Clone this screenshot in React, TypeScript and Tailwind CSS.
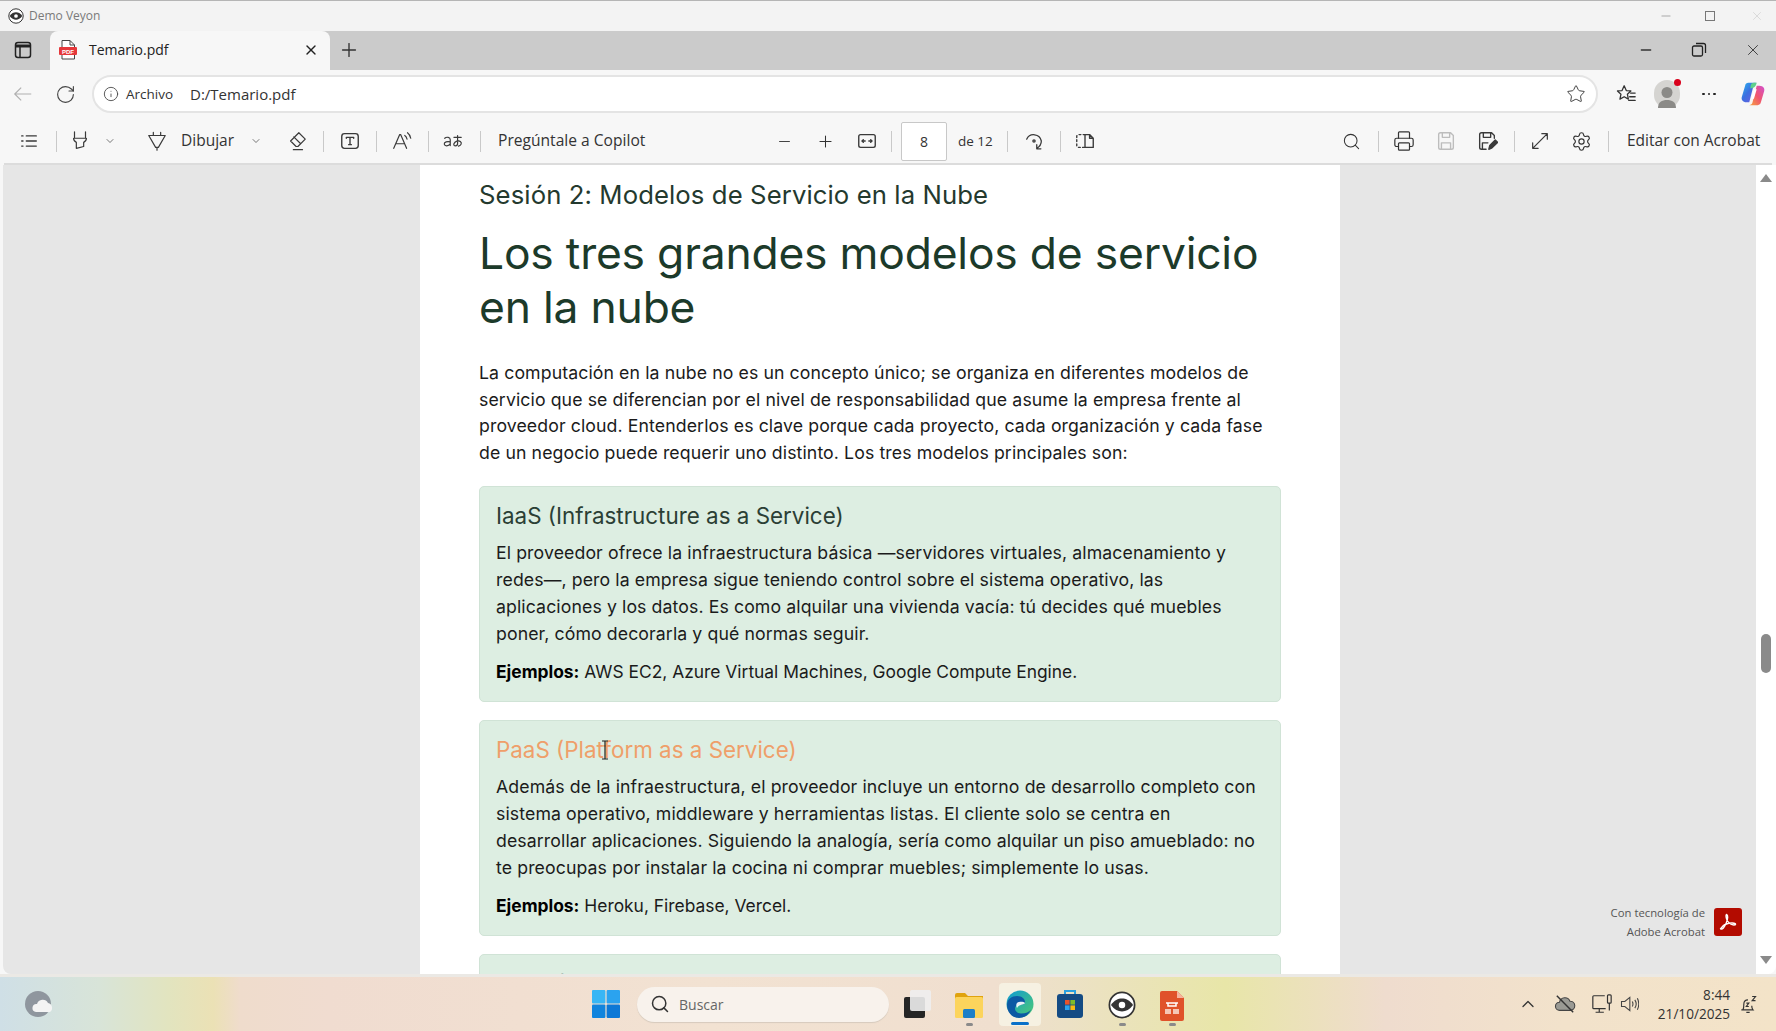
import React from 'react';
import { ChevronDown, ChevronUp, Info, Minus, Plus, Printer, RotateCw, Search, Settings, Star, X } from 'lucide-react';

const FONT_UI = 'font-["Open_Sans",sans-serif]';

const Svg = ({ size = 22, className = '', children }: { size?: number; className?: string; children: React.ReactNode }) => (
  <svg
    width={size}
    height={size}
    viewBox="0 0 24 24"
    fill="none"
    stroke="#3a3a3a"
    strokeWidth="1.5"
    strokeLinecap="round"
    strokeLinejoin="round"
    className={`shrink-0 ${className}`}
  >
    {children}
  </svg>
);

const Sep = ({ className = '' }: { className?: string }) => <div className={`h-[21px] w-px shrink-0 bg-[#c9c9c9] ${className}`} />;

const VeyonEye = ({ size = 16, className = '' }: { size?: number; className?: string }) => (
  <svg width={size} height={size} viewBox="0 0 24 24" className={`shrink-0 ${className}`}>
    <circle cx="12" cy="12" r="10.8" fill="#fff" stroke="#333" strokeWidth="1.500" />
    <path d="M2.500 12c3-4 6-5.500 9.500-5.500s6.500 1.500 9.500 5.500c-3 4-6 5.500-9.500 5.500s-6.500-1.500-9.500-5.500z" fill="#333" />
    <circle cx="12" cy="12" r="2.800" fill="#fff" />
  </svg>
);

const PdfIcon = () => (
  <svg width="18" height="20" viewBox="0 0 18 20" className="shrink-0">
    <path d="M3 .5h8l4.500 4.500v14H3z" fill="#fff" stroke="#444" />
    <path d="M11 .5v4.500h4.500" fill="none" stroke="#444" />
    <rect x="0" y="7" width="18" height="8" rx="1" fill="#e5383b" />
    <text x="9" y="13.500" textAnchor="middle" fontSize="6" fontWeight="700" fill="#fff" fontFamily="Liberation Sans">PDF</text>
  </svg>
);

const TitleBar = () => (
  <div className="flex h-[31px] items-center border-t border-[#b5b5b5] bg-[#f3f3f3] pl-[8px]">
    <VeyonEye />
    <span className={`ml-[5px] text-[12px] text-[#7a7a7a] ${FONT_UI}`}>Demo Veyon</span>
    <div className="ml-auto flex items-center text-[#777]">
      <Minus size={14} strokeWidth={1} />
      <div className="ml-[32px] h-[10px] w-[10px] border border-[#777]" />
      <X size={14} strokeWidth={1} className="ml-[35px] mr-[12px] text-[#c8c8c8]" />
    </div>
  </div>
);

const TabStrip = () => (
  <div className="flex h-[39px] items-end bg-[#cbcbcb]">
    <div className="flex h-[39px] w-[50px] items-center justify-center pb-[1px] pr-[4px]">
      <svg width="18" height="18" viewBox="0 0 18 18" fill="none" stroke="#222" strokeWidth="1.500">
        <rect x="1.500" y="1.500" width="15" height="15" rx="2.500" />
        <path d="M1.500 5h15" strokeWidth="3" />
        <path d="M6 5v11" />
      </svg>
    </div>
    <div className={`flex h-[39px] w-[280px] items-center rounded-t-[8px] bg-[#f7f7f7] pb-[2px] pl-[9px] ${FONT_UI}`}>
      <PdfIcon />
      <span className="ml-[12px] text-[14px] text-[#222]">Temario.pdf</span>
      <X size={16} strokeWidth={2} className="ml-auto mr-[11px] text-[#222]" />
    </div>
    <div className="flex h-[39px] w-[38px] items-center justify-center pb-[1px]">
      <Plus size={22} strokeWidth={1.500} className="text-[#333]" />
    </div>
    <div className="ml-auto flex h-[39px] items-center pb-[2px] text-[#333]">
      <Minus size={16} strokeWidth={2} />
      <svg width="16" height="16" viewBox="0 0 16 16" fill="none" stroke="#222" strokeWidth="1.300" className="ml-[37px]">
        <rect x="1.500" y="4" width="10" height="10" rx="1.500" />
        <path d="M5 1.500h7.500a2 2 0 0 1 2 2V11" />
      </svg>
      <X size={18} strokeWidth={1.200} className="ml-[37px] mr-[14px]" />
    </div>
  </div>
);

const AddressRow = () => (
  <div className={`flex h-[49px] items-center bg-[#f7f7f7] pb-[1px] ${FONT_UI}`}>
    <svg width="22" height="22" viewBox="0 0 24 24" fill="none" stroke="#b0b0b0" strokeWidth="1.300" className="ml-[12px] shrink-0">
      <path d="M21 12H3M10 5l-7 7 7 7" />
    </svg>
    <RotateCw size={21} strokeWidth={1.300} className="ml-[21px] text-[#444]" />
    <div className="ml-[16px] flex h-[38px] w-[1506px] items-center rounded-full border-2 border-[#e4e4e4] bg-white pl-[9px]">
      <Info size={16} strokeWidth={1.300} className="text-[#444]" />
      <span className="ml-[7px] w-[61px] text-[13.500px] text-[#333]">Archivo</span>
      <span className="ml-[3px] text-[15px] text-[#333]">D:/Temario.pdf</span>
      <Star size={20} strokeWidth={1.200} className="ml-auto mr-[10px] text-[#444]" />
    </div>
    <svg width="22" height="22" viewBox="0 0 24 24" fill="none" stroke="#333" strokeWidth="1.400" strokeLinejoin="round" className="ml-[17px] shrink-0">
      <path d="M10 3l2.300 5.200 5 .5-3.800 3.500 1.100 5.400L10 15l-4.600 2.600 1.100-5.400L2.700 8.700l5-.5z" />
      <path d="M17 11h5M16 15h6M15 19h7" strokeLinecap="round" />
    </svg>
    <div className="relative ml-[17px] flex h-[28px] w-[26px] shrink-0 items-end justify-center overflow-visible rounded-full bg-[#d5d4d1]">
      <svg width="24" height="24" viewBox="0 0 24 24" fill="#8b8a87">
        <circle cx="12" cy="8.500" r="5.500" />
        <path d="M3 24c0-6 4-8 9-8s9 2 9 8z" />
      </svg>
      <div className="absolute -right-[1px] -top-[1px] h-[7px] w-[7px] rounded-full bg-[#d9001b]" />
    </div>
    <div className="ml-[22px] flex items-center gap-[3px]">
      <div className="h-[2.500px] w-[2.500px] rounded-full bg-[#222]" />
      <div className="h-[2.500px] w-[2.500px] rounded-full bg-[#222]" />
      <div className="h-[2.500px] w-[2.500px] rounded-full bg-[#222]" />
    </div>
    <svg width="26" height="28" viewBox="0 0 28 28" className="ml-[24px] shrink-0">
      <defs>
        <linearGradient id="cop1" x1="0" y1="0" x2="1" y2="1">
          <stop offset="0" stopColor="#2ab8f0" />
          <stop offset="0.45" stopColor="#3b6fe0" />
          <stop offset="1" stopColor="#7a5be0" />
        </linearGradient>
        <linearGradient id="cop2" x1="0" y1="1" x2="1" y2="0">
          <stop offset="0" stopColor="#f6a33d" />
          <stop offset="0.5" stopColor="#f0566f" />
          <stop offset="1" stopColor="#d14fd0" />
        </linearGradient>
      </defs>
      <path d="M9 2h9c-2 0-3 1-3.500 3L10 23H7c-4 0-6-3-5-6L5.500 5C6 3 7 2 9 2z" fill="url(#cop1)" />
      <path d="M19 26h-9c2 0 3-1 3.500-3L18 5h3c4 0 6 3 5 6l-3.500 12c-.5 2-1.500 3-3.500 3z" fill="url(#cop2)" />
      <path d="M18 2h-3c-2 0-3 1-3.500 3L11 8c3 0 6-1 7-6z" fill="#5fd08c" />
      <path d="M15 9h3l-3 10h-3z" fill="#fff" />
    </svg>
  </div>
);

const PdfToolbar = () => (
  <div className={`mx-[4px] flex h-[46px] items-center rounded-t-[8px] border-b-2 border-[#dcdcdc] bg-[#f7f7f7] text-[#333] ${FONT_UI}`}>
    <Svg className="ml-[14px]">
      <path d="M9 6.500h11M9 12h11M9 17.500h11M4 6.500h1.500M4 12h1.500M4 17.500h1.500" strokeWidth="1.400" />
    </Svg>
    <Sep className="ml-[16px]" />
    <Svg className="ml-[12px]">
      <path d="M6 2v6M18 2v6M5 9h14M5 9c0 2 1 3.500 3 4.500V20l8-2v-4.500c2-1 3-2.500 3-4.500" strokeWidth="1.300" />
    </Svg>
    <ChevronDown size={12} strokeWidth={1.300} className="ml-[13px] shrink-0" />
    <Svg className="ml-[30px]">
      <path d="M3 6h18l-7.500 13h-3zM8 6V2.500M16 6V2.500M12 19v3" strokeWidth="1.300" />
    </Svg>
    <span className="ml-[13px] w-[52px] text-[15.500px]">Dibujar</span>
    <ChevronDown size={12} strokeWidth={1.300} className="ml-[17px] shrink-0" />
    <Svg className="ml-[24px]">
      <path d="M14 3l7 7-8 8h-2l-6-6zM8.500 7.500l7.500 7.500M8 21.500h10" strokeWidth="1.300" />
    </Svg>
    <Sep className="ml-[15px]" />
    <Svg className="ml-[15px]">
      <rect x="3" y="4" width="18" height="16" rx="3" />
      <path d="M8 9V8h8v1M12 8v8M10.500 16h3" />
    </Svg>
    <Sep className="ml-[15px]" />
    <Svg className="ml-[14px]">
      <path d="M3 20L9.500 5h1L17 20M5.500 15h9M15 6c1.500 1 2 2 2.500 4M18 3c2 1.500 3 3.500 3.500 6" strokeWidth="1.300" />
    </Svg>
    <Sep className="ml-[15px]" />
    <Svg className="ml-[13px]">
      <path d="M3 9c2-2 6-1 6 1.500V17M9 13c-3-1-7 0-6.500 2.500S7 18 9 15M13 8h8M17 6v9c0 3-5 3-4 0s5-4 7-2.500 1 4.500-2 5" strokeWidth="1.300" />
    </Svg>
    <Sep className="ml-[16px]" />
    <span className="ml-[17px] w-[148px] whitespace-nowrap text-[15.600px]">Pregúntale a Copilot</span>
    <Minus size={17} strokeWidth={1.300} className="ml-[130px] shrink-0" />
    <Plus size={19} strokeWidth={1.300} className="ml-[23px] shrink-0" />
    <Svg className="ml-[21px]">
      <rect x="3" y="5" width="18" height="14" rx="2" />
      <path d="M7 12h3M6.500 12l1.500-1.500M6.500 12l1.500 1.500M14 12h3.500M17.500 12L16 10.500M17.500 12L16 13.500" />
    </Svg>
    <Sep className="ml-[13px]" />
    <div className="ml-[9px] flex h-[39px] w-[46px] shrink-0 items-center justify-center rounded-[2px] border border-[#c8c8c8] bg-white text-[14px]">8</div>
    <span className="ml-[11px] w-[38px] whitespace-nowrap text-[13.500px]">de 12</span>
    <Sep className="ml-[11px]" />
    <Svg className="ml-[15px]">
      <path d="M4 10a8.500 8.500 0 0 1 16 2c0 3-1.500 6-5 8M15 16v4.500h4.500" strokeWidth="1.400" />
      <circle cx="12" cy="12" r="1.200" />
    </Svg>
    <Sep className="ml-[15px]" />
    <Svg className="ml-[13px]">
      <path d="M12 5H5a2 2 0 0 0-2 2v10a2 2 0 0 0 2 2h7" strokeDasharray="2 2.500" />
      <path d="M12 5h5l4 4v10h-9zM17 5v4h4" />
    </Svg>
    <Search size={19} strokeWidth={1.300} className="ml-[246px] shrink-0" />
    <Sep className="ml-[17px]" />
    <Printer size={22} strokeWidth={1.300} className="ml-[14px] shrink-0" />
    <Svg className="ml-[20px] opacity-30">
      <path d="M4 5a2 2 0 0 1 2-2h11l3 3v13a2 2 0 0 1-2 2H6a2 2 0 0 1-2-2zM8 3v5h8V3M7 21v-7h10v7" />
    </Svg>
    <Svg className="ml-[19px]">
      <path d="M20 9V6l-3-3H6a2 2 0 0 0-2 2v14a2 2 0 0 0 2 2h5M8 3v5h8V3M7 21v-7h6" />
      <path d="M14 21l1-4 6-6 2.500 2.500-6 6z" fill="#3a3a3a" />
    </Svg>
    <Sep className="ml-[16px]" />
    <Svg className="ml-[14px]">
      <path d="M14 4h6v6M20 4L4 20M4 14v6h6" strokeWidth="1.300" />
    </Svg>
    <Settings size={21} strokeWidth={1.300} className="ml-[20px] shrink-0" />
    <Sep className="ml-[16px]" />
    <span className="ml-[18px] whitespace-nowrap text-[15.500px]">Editar con Acrobat</span>
  </div>
);

const AdobeBadge = () => (
  <div className={`absolute bottom-[33px] right-[34px] flex items-center ${FONT_UI}`}>
    <div className="text-right text-[11.300px] leading-[19px] text-[#555]">
      <div>Con tecnología de</div>
      <div>Adobe Acrobat</div>
    </div>
    <div className="ml-[9px] flex h-[28px] w-[28px] items-center justify-center rounded-[3px] bg-[#b30b00]">
      <svg width="20" height="20" viewBox="0 0 24 24" fill="none" stroke="#fff" strokeWidth="1.600" strokeLinejoin="round">
        <path d="M3 20c2 2 5-2 7-7 1.500-4 2-9 .5-10-1.500 0-1 5 1 8 2.500 3.500 6 5 9 4.500 1.500-1 0-2.500-4-2.300-4 .2-9 2-11 4-1 1.300-2 2-2.500 2.800z" />
      </svg>
    </div>
  </div>
);

const Card = ({ title, titleColor, lines, examples }: { title: string; titleColor: string; lines?: string[]; examples?: string }) => (
  <div className="h-[216px] shrink-0 rounded-[5px] border border-[#d0e3d6] bg-[#ddeee2] pl-[16px] pt-[14px]">
    <h3 className={`whitespace-nowrap text-[22.400px] leading-[30px] ${titleColor}`}>{title}</h3>
    {lines && (
      <div className="mt-[8px] text-[17.700px] leading-[27.200px] tracking-[0.1px] text-[#1b1b1b]">
        {lines.map((line) => (
          <div key={line} className="whitespace-nowrap">{line}</div>
        ))}
      </div>
    )}
    {examples && (
      <p className="mt-[10px] whitespace-nowrap text-[17.400px] leading-[27px] text-[#1b1b1b]">
        <strong className="font-bold text-black">Ejemplos:</strong> {examples}
      </p>
    )}
  </div>
);

const PdfPage = () => (
  <div className='h-[809px] w-[920px] shrink-0 overflow-hidden bg-white pl-[59px] pr-[59px] font-["Inter",sans-serif]'>
    <h2 className="pt-[12px] text-[25.700px] leading-[36px] tracking-[0.1px] text-[#24392e]">Sesión 2: Modelos de Servicio en la Nube</h2>
    <h1 className="mt-[14px] text-[44.400px] leading-[53.500px] tracking-[-0.2px] text-[#1c3a2a]">
      <div className="whitespace-nowrap">Los tres grandes modelos de servicio</div>
      <div>en la nube</div>
    </h1>
    <div className="mt-[26px] text-[17.700px] leading-[26.700px] tracking-[0.1px] text-[#1b1b1b]">
      <div className="whitespace-nowrap">La computación en la nube no es un concepto único; se organiza en diferentes modelos de</div>
      <div className="whitespace-nowrap">servicio que se diferencian por el nivel de responsabilidad que asume la empresa frente al</div>
      <div className="whitespace-nowrap">proveedor cloud. Entenderlos es clave porque cada proyecto, cada organización y cada fase</div>
      <div className="whitespace-nowrap">de un negocio puede requerir uno distinto. Los tres modelos principales son:</div>
    </div>
    <div className="mt-[19px] flex flex-col gap-[18px]">
      <Card
        title="IaaS (Infrastructure as a Service)"
        titleColor="text-[#2b3f35]"
        lines={[
          'El proveedor ofrece la infraestructura básica —servidores virtuales, almacenamiento y',
          'redes—, pero la empresa sigue teniendo control sobre el sistema operativo, las',
          'aplicaciones y los datos. Es como alquilar una vivienda vacía: tú decides qué muebles',
          'poner, cómo decorarla y qué normas seguir.',
        ]}
        examples="AWS EC2, Azure Virtual Machines, Google Compute Engine."
      />
      <Card
        title="PaaS (Platform as a Service)"
        titleColor="text-[#ef9f6a]"
        lines={[
          'Además de la infraestructura, el proveedor incluye un entorno de desarrollo completo con',
          'sistema operativo, middleware y herramientas listas. El cliente solo se centra en',
          'desarrollar aplicaciones. Siguiendo la analogía, sería como alquilar un piso amueblado: no',
          'te preocupas por instalar la cocina ni comprar muebles; simplemente lo usas.',
        ]}
        examples="Heroku, Firebase, Vercel."
      />
      <Card title="SaaS (Software as a Service)" titleColor="text-[#2b3f35]" />
    </div>
  </div>
);

const Viewer = () => (
  <div className="relative flex h-[809px] overflow-hidden bg-[#f7f7f7]">
    <div className="ml-[3px] flex flex-1 overflow-hidden rounded-bl-[8px] bg-[#e6e6e6] pr-[2px]">
      <div className="w-[417px] shrink-0" />
      <PdfPage />
      <div className="flex-1" />
    </div>
    <div className="relative flex w-[20px] shrink-0 flex-col items-center rounded-br-[8px] bg-white pt-[9px]">
      <div className="h-0 w-0 border-x-[6px] border-b-[8px] border-x-transparent border-b-[#8a8a8a]" />
      <div className="mt-[452px] h-[39px] w-[10px] rounded-full bg-[#8a8a8a]" />
      <div className="mb-[10px] mt-auto h-0 w-0 border-x-[6px] border-t-[8px] border-x-transparent border-t-[#8a8a8a]" />
    </div>
    <AdobeBadge />
    {/* text cursor over the PaaS heading */}
    <svg width="10" height="20" viewBox="0 0 10 20" fill="none" stroke="#222" strokeWidth="1.200" className="absolute left-[600px] top-[575px]">
      <path d="M2 1h6M2 19h6M5 1v18" />
    </svg>
  </div>
);

const Taskbar = () => (
  <div className={`flex h-[57px] items-center border-t-[3px] border-[#ebe9e5] bg-[linear-gradient(90deg,#cfdfe6_0%,#d8e4d8_5.6%,#e2e4bf_9.5%,#ebe1b5_12%,#efdccc_13.5%,#f0dcd0_18.5%,#f2e2d2_40%,#f0dfcf_56%,#ece1c6_60%,#e8e6a8_69%,#efdcce_78%,#f2e2cb_88%,#f3e3c8_100%)] ${FONT_UI}`}>
    <svg width="28" height="32" viewBox="0 0 28 32" className="ml-[24px] shrink-0">
      <circle cx="14" cy="16" r="13" fill="#8f969e" />
      <path d="M12 24a4 4 0 0 1 1-8 6 6 0 0 1 11-1 5 5 0 0 1 2 9z" fill="#f4f4f4" />
    </svg>
    <svg width="28" height="28" viewBox="0 0 28 28" className="ml-[540px] shrink-0">
      <rect x="0" y="0" width="13.400" height="13.400" rx="1" fill="#38b6f5" />
      <rect x="14.600" y="0" width="13.400" height="13.400" rx="1" fill="#2ba3ef" />
      <rect x="0" y="14.600" width="13.400" height="13.400" rx="1" fill="#1184dd" />
      <rect x="14.600" y="14.600" width="13.400" height="13.400" rx="1" fill="#0d78d6" />
    </svg>
    <div className="ml-[17px] flex h-[35px] w-[252px] shrink-0 items-center rounded-full bg-[#f8f2ec] pl-[13px] shadow-[0_1px_1px_#d6cabd]">
      <Search size={20} strokeWidth={1.800} className="text-[#333]" />
      <span className="ml-[9px] text-[14px] text-[#666]">Buscar</span>
    </div>
    <div className="relative ml-[15px] h-[28px] w-[27px] shrink-0">
      <div className="absolute bottom-0 left-0 h-[21px] w-[21px] rounded-[2px] bg-[#252525]" />
      <div className="absolute right-0 top-0 h-[21px] w-[21px] rounded-[2px] bg-[#eeeeee]/90" />
    </div>
    <div className="ml-[22px] flex h-[43px] w-[32px] shrink-0 flex-col items-center justify-end">
      <svg width="28" height="28" viewBox="0 0 28 28">
        <path d="M0 4a2 2 0 0 1 2-2h8l3 3h15v4H0z" fill="#e0a30e" />
        <rect x="0" y="6" width="28" height="21" rx="1.500" fill="#fcd45c" />
        <rect x="8" y="18" width="12" height="9" rx="1.500" fill="#1c7fc8" />
      </svg>
      <div className="mt-[4px] h-[3px] w-[7px] rounded-full bg-[#8a8a8a]" />
    </div>
    <div className="ml-[14px] flex h-[43px] w-[42px] shrink-0 flex-col items-center justify-end rounded-[4px] bg-[#f6f1e2]">
      <svg width="28" height="28" viewBox="0 0 28 28">
        <defs>
          <linearGradient id="edge1" x1="0" y1="0" x2="1" y2="1">
            <stop offset="0" stopColor="#0f9ad4" />
            <stop offset="1" stopColor="#4ecb71" />
          </linearGradient>
        </defs>
        <circle cx="14" cy="14" r="13.500" fill="url(#edge1)" />
        <path d="M1 15c0-6 5-9 10-9 5 0 8 3 8 6 0 2-2 2.500-4 2.500-3 0-6 1-6 4 0 3 3 5 6 5 5 0 8-1.500 10-4-2 5-7 8.500-12 8.500C6 28 1 22 1 15z" fill="#0c59a4" />
        <path d="M11 13c3-2 7-1 8 0-1 2-6 1-8 5-1-2-1-4 0-5z" fill="#fff" opacity="0.9" />
      </svg>
      <div className="mb-[1px] mt-[4px] h-[3px] w-[18px] rounded-full bg-[#0a70c9]" />
    </div>
    <div className="ml-[15px] flex h-[43px] w-[28px] shrink-0 flex-col items-center justify-center">
      <svg width="26" height="30" viewBox="0 0 26 30">
        <path d="M8 6V2h10v4" fill="none" stroke="#2aa0e0" strokeWidth="2" />
        <rect x="0" y="5" width="26" height="24" rx="3" fill="#144b84" />
        <rect x="8" y="11" width="4.600" height="4.600" fill="#e8532b" />
        <rect x="13.400" y="11" width="4.600" height="4.600" fill="#7dbb2a" />
        <rect x="8" y="16.400" width="4.600" height="4.600" fill="#2ba3ef" />
        <rect x="13.400" y="16.400" width="4.600" height="4.600" fill="#f7b90f" />
      </svg>
    </div>
    <div className="ml-[24px] flex h-[43px] w-[28px] shrink-0 flex-col items-center justify-end">
      <VeyonEye size={28} />
      <div className="mt-[4px] h-[3px] w-[7px] rounded-full bg-[#8a8a8a]" />
    </div>
    <div className="ml-[23px] flex h-[43px] w-[26px] shrink-0 flex-col items-center justify-end">
      <svg width="24" height="30" viewBox="0 0 24 30">
        <path d="M2 0h15l7 7v21a2 2 0 0 1-2 2H2a2 2 0 0 1-2-2V2a2 2 0 0 1 2-2z" fill="#e0522a" />
        <path d="M17 0l7 7h-7z" fill="#f6b49d" />
        <path d="M6 12h12M8 12v3h8v-3" stroke="#fff" strokeWidth="1.500" fill="none" />
        <rect x="5" y="18" width="6" height="5" fill="#f5c6b6" />
        <rect x="13" y="18" width="6" height="5" fill="#f5c6b6" />
      </svg>
      <div className="mt-[2px] h-[3px] w-[7px] rounded-full bg-[#8a8a8a]" />
    </div>
    <ChevronUp size={20} strokeWidth={1.500} className="ml-[333px] shrink-0 text-[#333]" />
    <svg width="22" height="20" viewBox="0 0 24 22" fill="#9a9a94" stroke="#444" strokeWidth="1.200" className="ml-[16px] shrink-0">
      <path d="M6 18a4.500 4.500 0 0 1 0-9 6 6 0 0 1 11.500-1A5 5 0 0 1 18 18z" />
      <path d="M3 2l18 18" stroke="#333" strokeWidth="1.600" />
    </svg>
    <svg width="22" height="22" viewBox="0 0 24 24" fill="none" stroke="#333" strokeWidth="1.300" className="ml-[15px] shrink-0">
      <path d="M15 3H3a1 1 0 0 0-1 1v12a1 1 0 0 0 1 1h13M9 17v4M5 21h9" />
      <rect x="18" y="2" width="4" height="9" rx="1" />
      <path d="M20 11v8" />
    </svg>
    <svg width="20" height="20" viewBox="0 0 24 24" fill="none" stroke="#444" strokeWidth="1.300" className="ml-[6px] shrink-0">
      <path d="M3 9v6h4l6 5V4L7 9zM16 9c1 2 1 4 0 6M19 7c2 3 2 7 0 10M22 5c2 4 2 10 0 14" />
    </svg>
    <div className="ml-[17px] w-[74px] shrink-0 text-right text-[13.600px] leading-[19px] text-[#333]">
      <div>8:44</div>
      <div className="whitespace-nowrap">21/10/2025</div>
    </div>
    <svg width="20" height="20" viewBox="0 0 24 24" fill="none" stroke="#333" strokeWidth="1.400" className="ml-[8px] shrink-0">
      <path d="M6 19c1-2 1-3 1-7 0-3 2-5 5-5M4 19h14c-1-1-1.500-2-1.500-5M10 22h4M10 11h3l-3 4h3M17 3h4l-4 5h4" />
    </svg>
  </div>
);

export default function App() {
  return (
    <div className="flex h-[1031px] w-[1776px] flex-col overflow-hidden bg-[#f7f7f7]">
      <TitleBar />
      <TabStrip />
      <AddressRow />
      <PdfToolbar />
      <Viewer />
      <Taskbar />
    </div>
  );
}
